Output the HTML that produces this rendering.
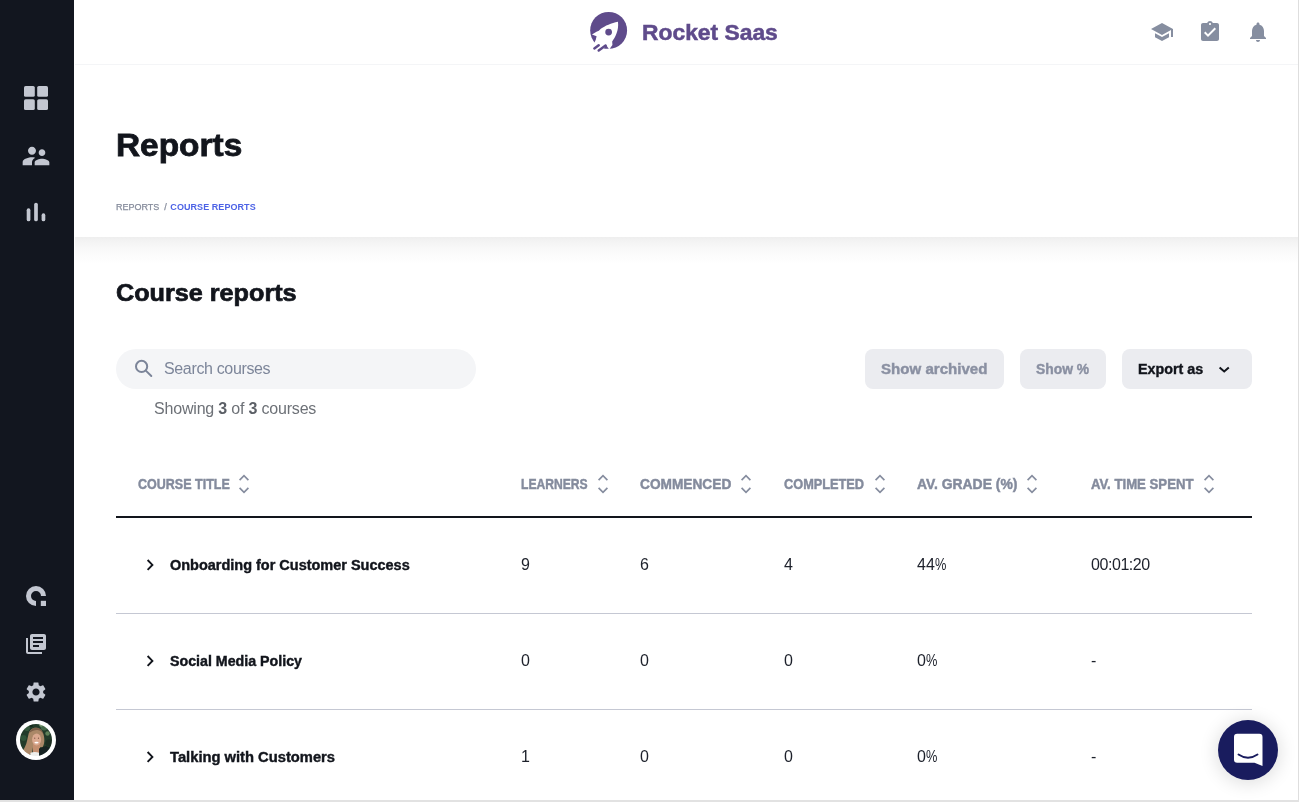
<!DOCTYPE html>
<html lang="en">
<head>
<meta charset="utf-8">
<title>Reports - Rocket Saas</title>
<style>
*{box-sizing:border-box;margin:0;padding:0}
html,body{width:1299px;height:802px;overflow:hidden;background:#fff}
body{font-family:"Liberation Sans","DejaVu Sans",sans-serif;color:#12151c;position:relative}
.abs{position:absolute}
#wrap{position:absolute;left:0;top:0;width:1299px;height:802px;will-change:transform}
#side{left:0;top:0;width:74px;height:802px;background:#12161f}
#side svg{position:absolute;display:block}
#top{left:75px;top:0;width:1224px;height:65px;background:#fff;border-bottom:1px solid #f4f5f7}
#hdr{left:74px;top:65px;width:1225px;height:172px;background:#fff}
#hsh{left:75px;top:237px;width:1223px;height:27px;background:linear-gradient(#eeeeee,#f3f3f3 15%,#f8f8f8 40%,#fcfcfc 70%,#fff)}
#brand{left:642px;top:17.8px;font-weight:700;font-size:21.5px;line-height:30px;color:#5f4b8b;white-space:nowrap;-webkit-text-stroke:.5px #5f4b8b;transform:scaleX(1.062);transform-origin:0 0}
h1{left:115.500px;top:121.6px;font-size:31.2px;line-height:48px;font-weight:700;color:#12151c;white-space:nowrap;-webkit-text-stroke:.8px #12151c;transform:scaleX(1.071);transform-origin:0 0}
#crumb{left:116px;top:200.5px;font-size:9px;line-height:12px;color:#868c9c;white-space:nowrap;letter-spacing:0;-webkit-text-stroke:.25px #868c9c}
#crumb b{color:#4d63e6;font-weight:700;-webkit-text-stroke:0;margin-left:1px;letter-spacing:.06px}
h2{left:115.5px;top:275.4px;font-size:23.5px;line-height:36px;font-weight:700;white-space:nowrap;-webkit-text-stroke:.7px #12151c;transform:scaleX(1.072);transform-origin:0 0}
#search{left:116px;top:349px;width:360px;height:40px;border-radius:20px;background:#f4f5f7}
#search span{position:absolute;left:48px;top:9px;font-size:16px;line-height:22px;color:#7c8599;white-space:nowrap;letter-spacing:-.35px}
#showing{left:154px;top:398px;font-size:16px;line-height:22px;color:#6d7177;white-space:nowrap;letter-spacing:-.19px}
#showing b{font-weight:700;color:#5b5f66}
.btn{top:349px;height:40px;border-radius:8px;background:#ebecf0;font-weight:700;font-size:14px;line-height:40px;color:#8a90a2;white-space:nowrap;text-align:left;-webkit-text-stroke:.4px currentColor}
.th{transform-origin:0 0;top:475.5px;font-size:14px;line-height:16px;font-weight:700;color:#848b9d;white-space:nowrap;-webkit-text-stroke:.45px #848b9d}
.td{font-size:16px;line-height:20px;color:#1d212b;white-space:nowrap;margin-top:-.5px}
.ti{transform-origin:0 0;font-size:14px;line-height:20px;font-weight:700;color:#12151c;white-space:nowrap;left:170.3px;-webkit-text-stroke:.4px #12151c}
.hr{left:116px;width:1136px;height:1px;background:#c5c8d3}
#edgeR{left:1298px;top:0;width:1px;height:802px;background:#dedede}
#edgeB{left:0;top:800px;width:1299px;height:2px;background:#e2e2e2}
</style>
</head>
<body>
<div id="wrap">
<div id="top" class="abs"></div>
<div id="hdr" class="abs"></div>
<div id="hsh" class="abs"></div>
<div id="side" class="abs"></div>

<div id="brand" class="abs">Rocket Saas</div>
<h1 class="abs">Reports</h1>
<div id="crumb" class="abs">REPORTS &nbsp;/ <b>COURSE REPORTS</b></div>
<h2 class="abs">Course reports</h2>

<div id="search" class="abs"><span>Search courses</span></div>
<div id="showing" class="abs">Showing <b>3</b> of <b>3</b> courses</div>

<div class="abs btn" style="left:865px;width:139px;padding-left:16px"><span style="display:inline-block;transform:scaleX(1.077);transform-origin:0 50%">Show archived</span></div>
<div class="abs btn" style="left:1020px;width:86px;padding-left:15.500px"><span style="display:inline-block;transform:scaleX(.99);transform-origin:0 50%">Show %</span></div>
<div class="abs btn" style="left:1122px;width:130px;padding-left:16px;color:#12151c"><span style="display:inline-block;transform:scaleX(1.02);transform-origin:0 50%">Export as</span></div>

<div class="abs th" style="left:138px;transform:scaleX(0.894)">COURSE TITLE</div>
<div class="abs th" style="left:521px;transform:scaleX(0.866)">LEARNERS</div>
<div class="abs th" style="left:640px;transform:scaleX(0.978)">COMMENCED</div>
<div class="abs th" style="left:784px;transform:scaleX(0.911)">COMPLETED</div>
<div class="abs th" style="left:917px;transform:scaleX(0.993)">AV. GRADE (%)</div>
<div class="abs th" style="left:1091px;transform:scaleX(0.941)">AV. TIME SPENT</div>
<div class="abs" style="left:116px;top:516px;width:1136px;height:2px;background:#12151c"></div>

<div class="abs ti" style="top:555px;transform:scaleX(1.034)">Onboarding for Customer Success</div>
<div class="abs td" style="left:521px;top:555px">9</div>
<div class="abs td" style="left:640px;top:555px">6</div>
<div class="abs td" style="left:784px;top:555px">4</div>
<div class="abs td" style="left:917px;top:555px">44<span style="display:inline-block;transform:scaleX(.8);transform-origin:0 50%">%</span></div>
<div class="abs td" style="left:1091px;top:555px;letter-spacing:-.44px">00:01:20</div>
<div class="abs hr" style="top:613px"></div>

<div class="abs ti" style="top:651px;transform:scaleX(1.016)">Social Media Policy</div>
<div class="abs td" style="left:521px;top:651px">0</div>
<div class="abs td" style="left:640px;top:651px">0</div>
<div class="abs td" style="left:784px;top:651px">0</div>
<div class="abs td" style="left:917px;top:651px">0<span style="display:inline-block;transform:scaleX(.8);transform-origin:0 50%">%</span></div>
<div class="abs td" style="left:1091px;top:651px">-</div>
<div class="abs hr" style="top:709px"></div>

<div class="abs ti" style="top:747px;transform:scaleX(1.052)">Talking with Customers</div>
<div class="abs td" style="left:521px;top:747px">1</div>
<div class="abs td" style="left:640px;top:747px">0</div>
<div class="abs td" style="left:784px;top:747px">0</div>
<div class="abs td" style="left:917px;top:747px">0<span style="display:inline-block;transform:scaleX(.8);transform-origin:0 50%">%</span></div>
<div class="abs td" style="left:1091px;top:747px">-</div>


<!-- sidebar icons -->
<svg class="abs" style="left:0;top:0" width="74" height="802" viewBox="0 0 74 802">
 <g fill="#c3c7d1">
  <rect x="24" y="86" width="10.8" height="10.8" rx="1.6"/><rect x="37.2" y="86" width="10.8" height="10.8" rx="1.6"/>
  <rect x="24" y="99.2" width="10.8" height="10.8" rx="1.6"/><rect x="37.2" y="99.2" width="10.8" height="10.8" rx="1.6"/>
  <g transform="translate(20,140) scale(1.3333)"><path d="M16.5 12c1.38 0 2.490-1.120 2.490-2.500S17.880 7 16.500 7C15.120 7 14 8.120 14 9.500s1.120 2.500 2.500 2.500zM9 11c1.660 0 2.990-1.340 2.990-3S10.660 5 9 5C7.340 5 6 6.340 6 8s1.340 3 3 3zm7.500 3c-1.830 0-5.500.920-5.500 2.750V19h11v-2.250c0-1.830-3.670-2.750-5.500-2.750zM9 13c-2.330 0-7 1.170-7 3.500V19h7v-2.250c0-.850.330-2.340 2.370-3.470C10.500 13.100 9.660 13 9 13z"/></g>
  <rect x="26.7" y="208.3" width="3.7" height="13" rx="1.85"/><rect x="34.15" y="202.7" width="3.7" height="18.6" rx="1.85"/><rect x="41.6" y="213.3" width="3.7" height="8" rx="1.85"/>
  <path d="M46 596A10 10 0 1 0 36 606L36 601A5 5 0 1 1 41 596Z"/><rect x="40.8" y="600.8" width="5.2" height="5.2"/>
  <g transform="translate(24,632)"><path d="M4 6H2v14c0 1.100.9 2 2 2h14v-2H4V6zm16-4H8c-1.100 0-2 .9-2 2v12c0 1.100.9 2 2 2h12c1.100 0 2-.9 2-2V4c0-1.100-.9-2-2-2zm-1 9H9V9h10v2zm-4 4H9v-2h6v2zm4-8H9V5h10v2z"/></g>
  <g transform="translate(24,680)"><path d="M19.140 12.940c.04-.3.060-.61.060-.94 0-.32-.02-.64-.07-.94l2.030-1.580c.18-.14.230-.41.120-.61l-1.920-3.320c-.12-.22-.37-.29-.59-.22l-2.390.96c-.5-.38-1.030-.7-1.620-.94l-.36-2.540c-.04-.24-.24-.41-.48-.41h-3.840c-.24 0-.43.170-.47.410l-.36 2.540c-.59.240-1.130.570-1.620.940l-2.390-.96c-.22-.08-.47 0-.59.220L2.740 8.870c-.12.210-.08.470.12.610l2.030 1.580c-.05.300-.09.630-.09.940s.02.640.07.940l-2.030 1.580c-.18.140-.23.410-.12.610l1.920 3.320c.12.220.37.290.59.220l2.390-.96c.5.380 1.030.7 1.620.94l.36 2.540c.05.240.24.410.48.410h3.840c.24 0 .44-.17.470-.41l.36-2.540c.59-.24 1.130-.56 1.620-.94l2.390.96c.22.080.47 0 .59-.22l1.920-3.320c.12-.22.070-.47-.12-.61l-2.010-1.580zM12 15.600c-1.980 0-3.600-1.620-3.600-3.600s1.620-3.600 3.600-3.600 3.600 1.620 3.600 3.600-1.620 3.600-3.600 3.600z"/></g>
 </g>
 <!-- avatar -->
 <defs><clipPath id="av"><circle cx="36" cy="740" r="16"/></clipPath><filter id="bl" x="-20%" y="-20%" width="140%" height="140%"><feGaussianBlur stdDeviation="0.55"/></filter></defs>
 <circle cx="36" cy="740" r="20" fill="#fff"/>
 <g clip-path="url(#av)"><g filter="url(#bl)">
  <rect x="16" y="720" width="40" height="40" fill="#223a29"/>
  <circle cx="27" cy="728" r="3" fill="#35593d"/><circle cx="44" cy="727" r="3.500" fill="#44694a"/><circle cx="47.500" cy="733.500" r="2.200" fill="#5d8059"/><circle cx="49" cy="743" r="3.500" fill="#1a2d21"/><circle cx="23.500" cy="738" r="3" fill="#2f5238"/><circle cx="41" cy="725" r="1.800" fill="#7d9c74"/><circle cx="31" cy="725" r="2" fill="#18291d"/>
  <path d="M36 727.800c-4 0-6.500 2.500-7.500 6.500-1 4-1.500 8.500-3.500 12.500-1 2-2 3.500-2.500 4.500l5 4.500 4.500-2.500 1-6 9.500 0c1.500-2 2-5 1.800-8.500-.3-6-3.300-11-8.300-11z" fill="#ab8868"/>
  <path d="M36 727.800c-3.500 0-6 2-7 5.500 3-2.500 6-3.500 8.500-3.300 3 .2 5 2 6 5-.500-4.500-3.500-7.200-7.500-7.200z" fill="#7b5f48"/>
  <rect x="33" y="744" width="7" height="9" fill="#c48f70"/>
  <ellipse cx="36.600" cy="739.400" rx="4.500" ry="6" fill="#dba990"/>
  <path d="M39 748.500l7-2.500 8 4v9h-15z" fill="#172220"/>
  <path d="M30.500 752.800c2.500-1 6-1 8.500 0v5h-9z" fill="#eeeeec"/>
  <circle cx="34.700" cy="738.200" r=".6" fill="#7a5443"/><circle cx="38.500" cy="738.200" r=".6" fill="#7a5443"/>
  <ellipse cx="36.500" cy="742.600" rx="2.100" ry=".9" fill="#fff"/>
 </g></g>
</svg>

<!-- logo -->
<svg class="abs" style="left:584px;top:7px" width="50" height="50" viewBox="0 0 802 802">
 <circle cx="395" cy="375" r="296" fill="#5f4b8b"/>
 <path d="M545 235C440 255 335 300 270 350L238 382 200 396 128 440 202 470 190 520 168 572 120 700 413 700 413 670 456 609 452 555C500 480 562 380 545 235Z" fill="#fff"/>
 <path d="M322 670L348 602 398 670Z" fill="#5f4b8b"/>
 <circle cx="395" cy="402" r="54" fill="#5f4b8b"/>
 <g stroke="#5f4b8b" stroke-width="40" stroke-linecap="round"><path d="M166 664L236 614"/><path d="M236 697L346 619"/></g>
</svg>

<!-- top right icons -->
<svg class="abs" style="left:1150px;top:20px" width="24" height="24" viewBox="0 0 24 24" fill="#868ea0"><path d="M5 13.180v4L12 21l7-3.820v-4L12 17l-7-3.820zM12 3L1 9l11 6 9-4.910V17h2V9L12 3z"/></svg>
<svg class="abs" style="left:1198px;top:20px" width="24" height="24" viewBox="0 0 24 24" fill="#868ea0"><path d="M19 3h-4.180C14.400 1.840 13.300 1 12 1c-1.300 0-2.400.840-2.820 2H5c-1.100 0-2 .9-2 2v14c0 1.100.9 2 2 2h14c1.100 0 2-.9 2-2V5c0-1.100-.9-2-2-2zm-7 0c.550 0 1 .450 1 1s-.450 1-1 1-1-.450-1-1 .450-1 1-1zm-2 14l-4-4 1.410-1.410L10 14.170l6.590-6.590L18 9l-8 8z"/></svg>
<svg class="abs" style="left:1246px;top:20px" width="24" height="24" viewBox="0 0 24 24" fill="#868ea0"><path d="M12 22c1.100 0 2-.9 2-2h-4c0 1.100.890 2 2 2zm6-6v-5c0-3.070-1.640-5.640-4.500-6.320V4c0-.830-.670-1.500-1.500-1.500s-1.500.670-1.500 1.500v.680C7.630 5.360 6 7.920 6 11v5l-2 2v1h16v-1l-2-2z"/></svg>

<!-- search icon, chevrons, sort icons -->
<svg class="abs" style="left:74px;top:340px" width="1225px" height="462" viewBox="74 340 1225 462" fill="none">
 <g stroke="#7c8599" stroke-width="2" stroke-linecap="round"><circle cx="141.600" cy="366.400" r="5.600"/><path d="M145.800 370.600L151.300 376"/></g>
 <path d="M1219.600 367.400L1224.200 371.500 1228.800 367.400" stroke="#12151c" stroke-width="2"/>
 <g stroke="#12151c" stroke-width="1.900">
  <path d="M147.600 560L152.400 564.900 147.600 569.800"/><path d="M147.600 656L152.400 660.900 147.600 665.800"/><path d="M147.600 752L152.400 756.900 147.600 761.800"/>
 </g>
 <g stroke="#868d9f" stroke-width="1.7" id="sorts">
  <path d="M-4.400 -3.900L0 -8.300 4.400 -3.900M-4.400 3.900L0 8.300 4.400 3.900" transform="translate(244,484)"/><path d="M-4.400 -3.900L0 -8.300 4.400 -3.900M-4.400 3.900L0 8.300 4.400 3.900" transform="translate(603,484)"/><path d="M-4.400 -3.900L0 -8.300 4.400 -3.900M-4.400 3.900L0 8.300 4.400 3.900" transform="translate(746,484)"/><path d="M-4.400 -3.900L0 -8.300 4.400 -3.900M-4.400 3.900L0 8.300 4.400 3.900" transform="translate(880,484)"/><path d="M-4.400 -3.900L0 -8.300 4.400 -3.900M-4.400 3.900L0 8.300 4.400 3.900" transform="translate(1032,484)"/><path d="M-4.400 -3.900L0 -8.300 4.400 -3.900M-4.400 3.900L0 8.300 4.400 3.900" transform="translate(1209,484)"/>
 </g>
</svg>

<!-- chat bubble -->
<svg class="abs" style="left:1199px;top:700px;overflow:visible" width="100" height="102" viewBox="0 0 100 102">
 <defs><filter id="sh" x="-100%" y="-100%" width="300%" height="300%"><feGaussianBlur stdDeviation="9"/></filter></defs>
 <circle cx="49" cy="52" r="32" fill="#000" opacity=".12" filter="url(#sh)"/>
 <circle cx="49" cy="50" r="30" fill="#191c5e"/>
 <path d="M38.200 33.800h22.100a3.200 3.200 0 0 1 3.200 3.200v29l-8-3.200h-17.300a3.200 3.200 0 0 1-3.200-3.200v-22.600a3.200 3.200 0 0 1 3.200-3.200z" fill="#fff"/>
 <path d="M39.500 54.500q9.500 6.500 19 0" stroke="#191c5e" stroke-width="1.900" fill="none" stroke-linecap="round"/>
</svg>

<div id="edgeR" class="abs"></div>
<div id="edgeB" class="abs"></div>
</div>
</body>
</html>
